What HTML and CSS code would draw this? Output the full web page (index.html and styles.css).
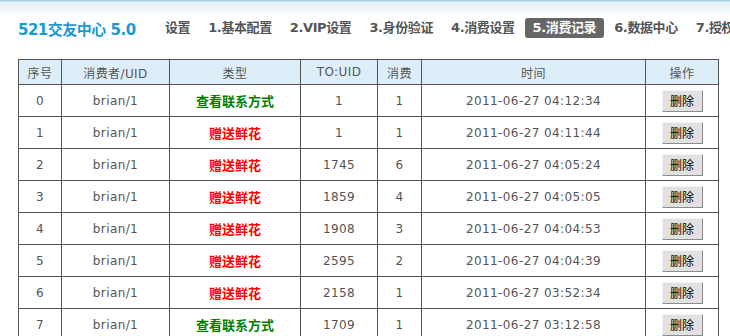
FILE: index.html
```html
<!DOCTYPE html>
<html lang="zh-CN">
<head>
<meta charset="utf-8">
<title>521交友中心 5.0 - 消费记录</title>
<link rel="stylesheet" href="styles.css">
</head>
<body>
<div class="page">
  <div class="header">
    <h1 class="title">521交友中心 5.0</h1>
    <nav class="nav">
      <span class="nav-item">设置</span>
      <a class="nav-item" href="#">1.基本配置</a>
      <a class="nav-item" href="#">2.VIP设置</a>
      <a class="nav-item" href="#">3.身份验证</a>
      <a class="nav-item" href="#">4.消费设置</a>
      <a class="nav-item active" href="#">5.消费记录</a>
      <a class="nav-item" href="#">6.数据中心</a>
      <a class="nav-item" href="#">7.授权管理</a>
    </nav>
  </div>
  <table class="records">
    <colgroup>
      <col class="c-id"><col class="c-user"><col class="c-type"><col class="c-to"><col class="c-cost"><col class="c-time"><col class="c-op">
    </colgroup>
    <thead>
      <tr><th>序号</th><th>消费者/UID</th><th>类型</th><th>TO:UID</th><th>消费</th><th>时间</th><th>操作</th></tr>
    </thead>
    <tbody>
      <tr><td>0</td><td>brian/1</td><td class="type view">查看联系方式</td><td>1</td><td>1</td><td>2011-06-27 04:12:34</td><td><button class="del-btn">删除</button></td></tr>
      <tr><td>1</td><td>brian/1</td><td class="type gift">赠送鲜花</td><td>1</td><td>1</td><td>2011-06-27 04:11:44</td><td><button class="del-btn">删除</button></td></tr>
      <tr><td>2</td><td>brian/1</td><td class="type gift">赠送鲜花</td><td>1745</td><td>6</td><td>2011-06-27 04:05:24</td><td><button class="del-btn">删除</button></td></tr>
      <tr><td>3</td><td>brian/1</td><td class="type gift">赠送鲜花</td><td>1859</td><td>4</td><td>2011-06-27 04:05:05</td><td><button class="del-btn">删除</button></td></tr>
      <tr><td>4</td><td>brian/1</td><td class="type gift">赠送鲜花</td><td>1908</td><td>3</td><td>2011-06-27 04:04:53</td><td><button class="del-btn">删除</button></td></tr>
      <tr><td>5</td><td>brian/1</td><td class="type gift">赠送鲜花</td><td>2595</td><td>2</td><td>2011-06-27 04:04:39</td><td><button class="del-btn">删除</button></td></tr>
      <tr><td>6</td><td>brian/1</td><td class="type gift">赠送鲜花</td><td>2158</td><td>1</td><td>2011-06-27 03:52:34</td><td><button class="del-btn">删除</button></td></tr>
      <tr><td>7</td><td>brian/1</td><td class="type view">查看联系方式</td><td>1709</td><td>1</td><td>2011-06-27 03:12:58</td><td><button class="del-btn">删除</button></td></tr>
    </tbody>
  </table>
</div>
</body>
</html>
```
FILE: styles.css
```css
html, body {
  margin: 0;
  padding: 0;
  overflow: hidden;
}
body {
  width: 730px;
  height: 336px;
  background: #fff linear-gradient(to bottom, #a9cfe4 0, #a9cfe4 1px, #e2f1f9 2px, #ffffff 16px) no-repeat;
  background-size: 100% 16px;
  font-family: "DejaVu Sans", "Noto Sans CJK SC", sans-serif;
  color: #555;
}
.page {
  padding-left: 18px;
}
.header {
  display: flex;
  align-items: center;
  height: 20px;
  padding-top: 18px;
  white-space: nowrap;
}
.title {
  flex: 0 0 139px;
  margin: 0;
  font-size: 15px;
  font-weight: bold;
  color: #1a9ad3;
  letter-spacing: -0.5px;
}
.nav {
  display: flex;
  gap: 2px;
}
.nav-item {
  display: block;
  padding: 0 8px;
  height: 20px;
  line-height: 20px;
  font-size: 13px;
  font-weight: bold;
  color: #555;
  letter-spacing: -0.4px;
  border-radius: 3px;
  text-decoration: none;
}
.nav-item.active {
  background: #666;
  color: #fff;
}
.records {
  margin-top: 21px;
  border-collapse: collapse;
  table-layout: fixed;
  width: 700px;
}
.c-id { width: 43px; }
.c-user { width: 108px; }
.c-type { width: 131px; }
.c-to { width: 77px; }
.c-cost { width: 44px; }
.c-time { width: 224px; }
.c-op { width: 73px; }
.records th,
.records td {
  border: 1px solid #555;
  padding: 0;
  text-align: center;
  font-size: 12px;
  letter-spacing: 0.4px;
  color: #555;
}
.records th {
  height: 24px;
  background: #deeef8;
  font-weight: normal;
}
.records td {
  height: 31px;
}
.records td.type {
  font-size: 13px;
  font-weight: bold;
  letter-spacing: 0;
}
.records td.view { color: #008000; }
.records td.gift { color: #ff0000; }
.del-btn {
  display: inline-block;
  vertical-align: middle;
  width: 41px;
  height: 22px;
  padding: 0;
  font-family: "Noto Sans CJK SC", sans-serif;
  font-size: 12px;
  color: #000;
  background: #e1e1e1;
  border: 1px solid;
  border-color: #f4f4f4 #8a8a8a #8a8a8a #f4f4f4;
  border-radius: 0;
}
```
